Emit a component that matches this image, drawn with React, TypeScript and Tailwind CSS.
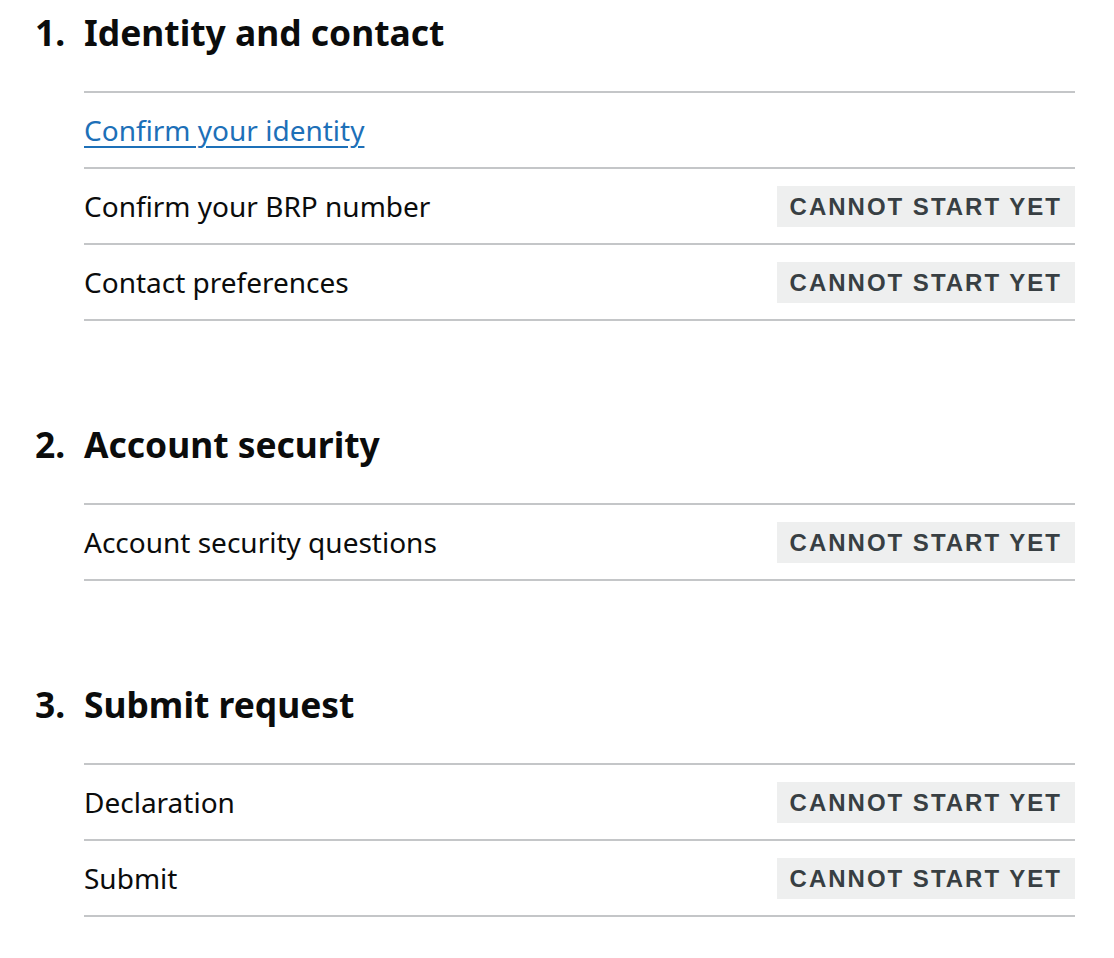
import React from 'react';

type Task = { name: string; href?: string; status?: string };
type Section = { title: string; tasks: Task[] };

const sections: Section[] = [
  {
    title: 'Identity and contact',
    tasks: [
      { name: 'Confirm your identity', href: '#' },
      { name: 'Confirm your BRP number', status: 'Cannot start yet' },
      { name: 'Contact preferences', status: 'Cannot start yet' },
    ],
  },
  {
    title: 'Account security',
    tasks: [{ name: 'Account security questions', status: 'Cannot start yet' }],
  },
  {
    title: 'Submit request',
    tasks: [
      { name: 'Declaration', status: 'Cannot start yet' },
      { name: 'Submit', status: 'Cannot start yet' },
    ],
  },
];

function TaskRow({ task }: { task: Task }) {
  return (
    <li className="flex h-[76px] items-center justify-between border-b-2 border-[#c4c6c8]">
      {task.href ? (
        <a
          href={task.href}
          className="text-[28px] text-[#1d70b8] underline decoration-[2px] underline-offset-[5px]"
        >
          {task.name}
        </a>
      ) : (
        <span className="text-[28px] text-[#0b0c0c]">{task.name}</span>
      )}
      {task.status && (
        <strong className="bg-[#eeefef] px-[13px] pt-[7px] pb-[6px] font-['Liberation_Sans',Arial,sans-serif] text-[24px] leading-[28px] font-bold uppercase tracking-[2px] text-[#383f43]">
          {task.status}
        </strong>
      )}
    </li>
  );
}

export default function App() {
  return (
    <div
      className="min-h-screen bg-white pt-[7px] pl-[35px] pr-[39px] text-[#0b0c0c]"
      style={{ fontFamily: '"Noto Sans", Arial, sans-serif' }}
    >
      <ol className="flex flex-col gap-[98px]">
        {sections.map((section, i) => (
          <li key={section.title}>
            <h2 className="mb-[34px] flex text-[35.4px] leading-[50px] font-bold">
              <span className="w-[49px] shrink-0">{i + 1}.</span>
              <span>{section.title}</span>
            </h2>
            <ul className="ml-[49px] border-t-2 border-[#c4c6c8]">
              {section.tasks.map((task) => (
                <TaskRow key={task.name} task={task} />
              ))}
            </ul>
          </li>
        ))}
      </ol>
    </div>
  );
}
